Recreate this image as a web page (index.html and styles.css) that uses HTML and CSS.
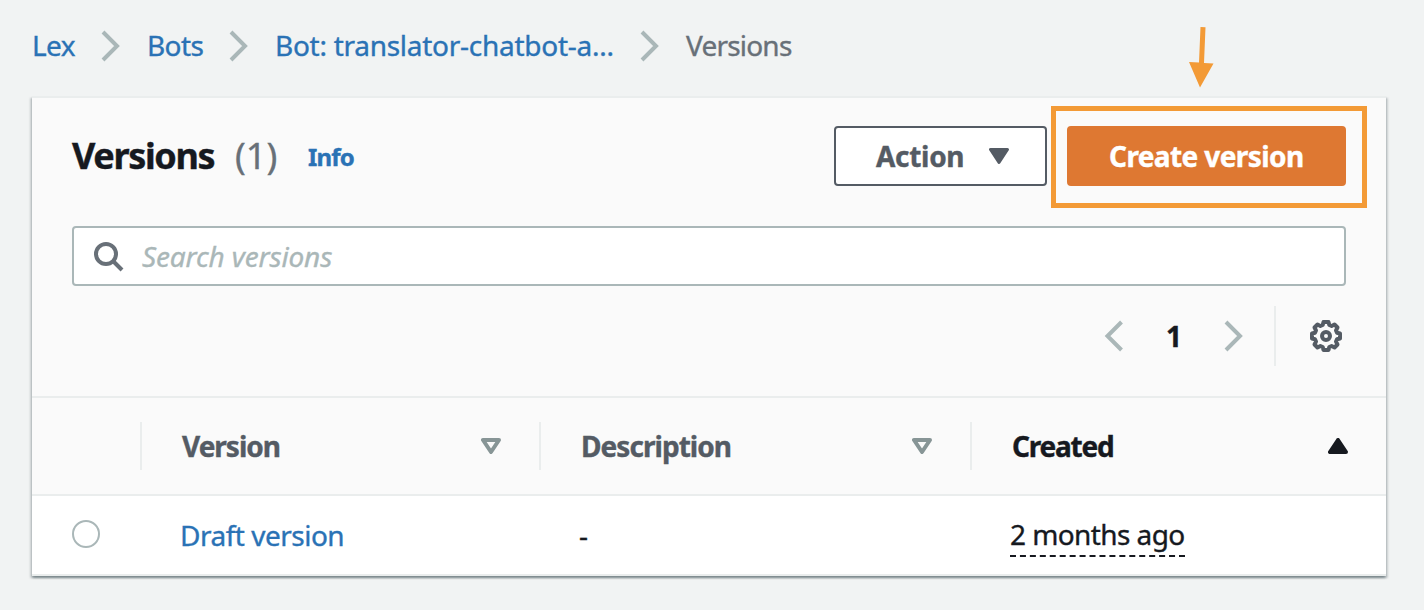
FILE: index.html
```html
<!DOCTYPE html>
<html lang="en">
<head>
<meta charset="utf-8">
<title>Versions</title>
<link rel="stylesheet" href="styles.css">
</head>
<body>
<nav class="breadcrumbs">
  <a class="crumb crumb-lex">Lex</a>
  <svg class="chevron" viewBox="0 0 20 32"><path d="M2 2 16 16 2 30"/></svg>
  <a class="crumb crumb-bots">Bots</a>
  <svg class="chevron" viewBox="0 0 20 32"><path d="M2 2 16 16 2 30"/></svg>
  <a class="crumb crumb-bot">Bot: translator-chatbot-a...</a>
  <svg class="chevron" viewBox="0 0 20 32"><path d="M2 2 16 16 2 30"/></svg>
  <span class="crumb crumb-current">Versions</span>
</nav>
<main class="card">
  <header class="card-header">
    <div class="title-row">
      <h1 class="title">Versions</h1>
      <span class="count">(1)</span>
      <a class="info">Info</a>
      <button class="button action"><span class="action-label">Action</span>
        <svg class="caret" viewBox="0 0 20 18"><path d="M1.500 2.500H18.500L10 15.500Z"/></svg>
      </button>
      <div class="create-wrap">
        <button class="button create"><span class="create-label">Create version</span></button>
        <div class="highlight"></div>
        <svg class="arrow" viewBox="0 0 28 64"><path d="M12.500 2 17.500 2.300 16 38 25.500 38.500 12 62.500 1 37 11 37.500Z"/></svg>
      </div>
    </div>
    <div class="search">
      <svg class="search-icon" viewBox="0 0 32 32"><circle cx="14" cy="14" r="10"/><path d="M21 21 30 30"/></svg>
      <span class="placeholder">Search versions</span>
    </div>
    <div class="tools">
      <svg class="chevron" viewBox="0 0 20 32"><path d="M18.500 2 4.500 16 18.500 30"/></svg>
      <span class="page">1</span>
      <svg class="chevron" viewBox="0 0 20 32"><path d="M3 2 17 16 3 30"/></svg>
      <div class="tools-divider"></div>
      <svg class="gear" viewBox="0 0 32 32"><path d="M13.500 2H18.500L19.300 5 21.600 6 24.500 4.500 27.500 7.500 26 10.400 27 12.700 30 13.500V18.500L27 19.300 26 21.600 27.500 24.500 24.500 27.500 21.600 26 19.300 27 18.500 30H13.500L12.700 27 10.400 26 7.500 27.500 4.500 24.500 6 21.600 5 19.300 2 18.500V13.500L5 12.700 6 10.400 4.500 7.500 7.500 4.500 10.400 6 12.700 5Z"/><circle cx="16" cy="16" r="4"/></svg>
    </div>
  </header>
  <section class="grid table-head">
    <div class="cell select-cell"></div>
    <div class="cell head-cell"><span class="h-version">Version</span>
      <svg class="sort" viewBox="0 0 20 16"><path d="M2 2H18L10 14Z"/></svg></div>
    <div class="cell head-cell"><span class="h-description">Description</span>
      <svg class="sort" viewBox="0 0 20 16"><path d="M2 2H18L10 14Z"/></svg></div>
    <div class="cell head-cell sorted"><span class="h-created">Created</span>
      <svg class="sort" viewBox="0 0 20 16"><path d="M2 14H18L10 2Z"/></svg></div>
  </section>
  <section class="grid table-row">
    <div class="cell select-cell"><span class="radio"></span></div>
    <div class="cell"><a class="draft">Draft version</a></div>
    <div class="cell dash">-</div>
    <div class="cell"><span class="date">2 months ago</span></div>
  </section>
</main>
</body>
</html>
```
FILE: styles.css
```css
* { box-sizing: border-box; }
body {
  margin: 0;
  height: 610px;
  overflow: hidden;
  background: #f1f3f3;
  color: #16191f;
  font: 28px/40px "Noto Sans", sans-serif;
  white-space: nowrap;
}
a { color: #2a72b5; }
svg { display: block; flex: none; fill: none; }

.breadcrumbs {
  display: flex;
  align-items: center;
  height: 96px;
  padding: 0 0 4px 32px;
}
.crumb, .count, .placeholder, .draft, .date, .dash { -webkit-text-stroke: .35px currentColor; }
.title, .info, .button, .page, .head-cell { -webkit-text-stroke: .4px currentColor; }
.crumb { flex: none; padding-bottom: 2px; }
.crumb-lex { width: 69px; letter-spacing: -.6px; }
.crumb-bots { width: 82px; letter-spacing: -.6px; }
.crumb-bot { width: 365px; letter-spacing: -.27px; }
.crumb-current { color: #687078; letter-spacing: -.8px; }
.chevron { width: 20px; height: 32px; stroke: #aab7b8; stroke-width: 4; }
.breadcrumbs .chevron { margin-right: 26px; }

.card {
  width: 1354px;
  height: 480px;
  margin-left: 32px;
  background: #fff;
  border-top: 2px solid #eaeded;
  border-bottom: 2px solid #eaeded;
  box-shadow: 0 2px 2px rgba(0,28,36,.3), 2px 2px 2px rgba(0,28,36,.15), -2px 2px 2px rgba(0,28,36,.15);
}
.card-header {
  height: 300px;
  padding: 28px 40px 0;
  background: #fafafa;
  border-bottom: 2px solid #eaeded;
}
.title-row { display: flex; height: 60px; align-items: center; }
.title { width: 163px; margin: 0; font-size: 36px; letter-spacing: -1.350px; }
.count { width: 73px; font-size: 36px; color: #687078; }
.info { font-size: 24px; font-weight: 700; letter-spacing: -.8px; padding-top: 2px; }
.button {
  display: flex;
  align-items: center;
  height: 60px;
  padding: 0 0 0 40px;
  border: 2px solid #545b64;
  border-radius: 4px;
  background: #fff;
  color: #545b64;
  font: 700 28px/40px "Noto Sans", sans-serif;
}
.action { width: 213px; margin: 0 20px 0 auto; }
.action-label { width: 113px; text-align: left; letter-spacing: -.3px; }
.caret { width: 20px; height: 18px; fill: #545b64; stroke: #545b64; stroke-width: 3; stroke-linejoin: round; }
.create-wrap { position: relative; }
.create { width: 279px; background: #de7832; border-color: #de7832; color: #fff; }
.create-label { letter-spacing: -.6px; }
.highlight { position: absolute; left: -16px; top: -20px; width: 316px; height: 102px; border: 5px solid #f39a36; }
.arrow { position: absolute; left: 121px; top: -101px; width: 28px; height: 64px; fill: #f39a36; }

.search {
  display: flex;
  align-items: center;
  height: 60px;
  margin-top: 40px;
  padding-left: 18px;
  border: 2px solid #aab7b8;
  border-radius: 4px;
  background: #fff;
}
.search-icon { width: 32px; height: 32px; margin-right: 18px; stroke: #687078; stroke-width: 4; }
.placeholder { font-style: italic; color: #aab7b8; letter-spacing: -.15px; }
.tools { display: flex; align-items: center; justify-content: flex-end; height: 60px; margin-top: 20px; padding-right: 4px; }
.page { width: 100px; padding-left: 2px; text-align: center; font-weight: 700; }
.tools-divider { width: 2px; height: 60px; margin: 0 34px 0 31px; background: #eaeded; }
.gear { width: 32px; height: 32px; stroke: #545b64; stroke-width: 4; stroke-linejoin: round; }

.grid { display: grid; grid-template-columns: 110px 399px 431px 414px; }
.table-head { height: 98px; background: #fafafa; border-bottom: 2px solid #eaeded; align-items: center; }
.cell { display: flex; align-items: center; }
.select-cell { height: 48px; border-right: 2px solid #eaeded; }
.head-cell {
  justify-content: space-between;
  height: 48px;
  padding: 0 38px 0 40px;
  border-right: 2px solid #eaeded;
  color: #545b64;
  font-weight: 700;
}
.head-cell.sorted { color: #16191f; border: 0; }
.h-version { letter-spacing: -1px; }
.h-description { letter-spacing: -.95px; }
.h-created { letter-spacing: -1.200px; }
.sort { width: 20px; height: 16px; stroke: #879596; stroke-width: 4; stroke-linejoin: round; }
.sorted .sort { fill: #16191f; stroke: #16191f; }
.table-row { height: 78px; align-items: center; }
.table-row .cell { padding: 0 0 0 38px; }
.table-row .select-cell { border: 0; padding: 0 0 2px 40px; }
.radio { width: 28px; height: 28px; border: 2px solid #aab7b8; border-radius: 50%; }
.draft { letter-spacing: -.5px; }
.date { height: 43px; padding-bottom: 1px; margin-top: 1px; border-bottom: 2px dashed #16191f; letter-spacing: -.58px; }
```
